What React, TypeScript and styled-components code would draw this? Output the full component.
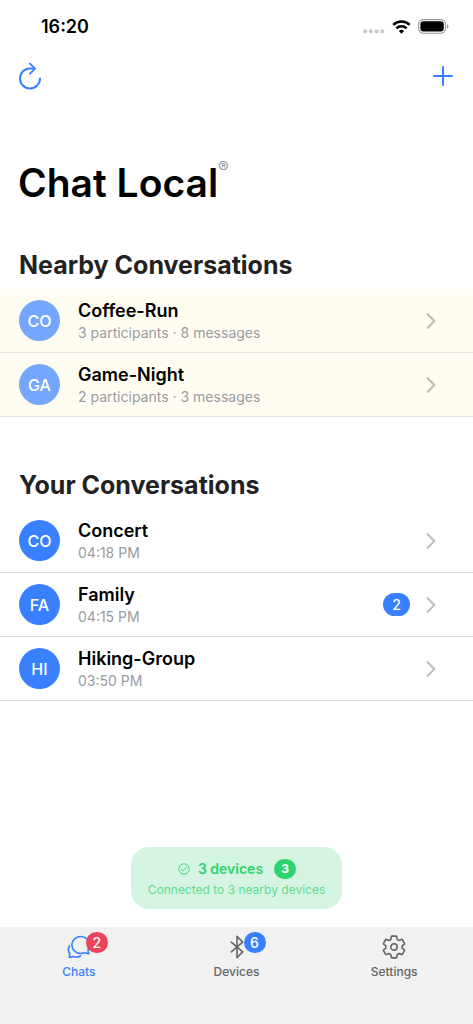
import React from "react";
import styled, { createGlobalStyle } from "styled-components";
import {
  IoAddOutline,
  IoBluetoothOutline,
  IoChatbubblesOutline,
  IoCheckmarkCircleOutline,
  IoChevronForward,
  IoRefreshOutline,
  IoSettingsOutline,
} from "react-icons/io5";

const GlobalStyle = createGlobalStyle`
  *, *::before, *::after { box-sizing: border-box; }
  body {
    margin: 0;
    background: #fff;
    color: #000;
    font-family: Inter, "Liberation Sans", sans-serif;
  }
  h1, h2, p, ul { margin: 0; padding: 0; }
  ul { list-style: none; }
  button {
    margin: 0;
    padding: 0;
    border: 0;
    background: none;
    color: inherit;
    font: inherit;
    text-align: left;
    cursor: pointer;
  }
  svg { display: block; flex: none; }
`;

const Screen = styled.div`
  display: flex;
  flex-direction: column;
  min-height: 100vh;
`;

const StatusBar = styled.div`
  display: flex;
  align-items: center;
  justify-content: space-between;
  height: 53px;
  padding: 0 24px 0 41px;
`;

const Clock = styled.time`
  font-size: 18px;
  line-height: 24px;
  font-weight: 600;
`;

const StatusIcons = styled.div`
  display: flex;
  align-items: center;
  gap: 7px;
`;

const Toolbar = styled.div`
  display: flex;
  align-items: center;
  justify-content: space-between;
  height: 46px;
  padding: 0 14px;
  color: #3880ff;
  font-size: 32px;
`;

const Main = styled.main`
  flex: 1;
  padding-top: 58px;
`;

const Title = styled.h1`
  display: flex;
  align-items: flex-start;
  padding: 0 18px;
  font-size: 39px;
  line-height: 52px;
  font-weight: 600;
`;

const Mark = styled.span`
  color: #92949c;
  font-size: 16px;
  line-height: 20px;
  font-weight: 400;
`;

const Section = styled.section`
  padding: 40px 0 12px;
`;

const Heading = styled.h2`
  padding: 0 19px 8px;
  color: #222;
  font-size: 25px;
  line-height: 32px;
  font-weight: 700;
`;

const Row = styled.button<{ $nearby?: boolean }>`
  display: flex;
  align-items: center;
  width: 100%;
  height: 64px;
  padding: 0 30px 0 19px;
  border-bottom: 1px solid ${(p) => (p.$nearby ? "#e2e4df" : "#e2e2e3")};
  background: ${(p) => (p.$nearby ? "#fffdf1" : "#fff")};
`;

const Avatar = styled.span<{ $nearby?: boolean }>`
  display: flex;
  align-items: center;
  justify-content: center;
  width: 41px;
  height: 41px;
  border-radius: 50%;
  background: ${(p) => (p.$nearby ? "#74a6fd" : "#3880ff")};
  color: #fff;
  font-size: 16px;
  line-height: 20px;
  font-weight: 500;
`;

const RowText = styled.span`
  display: flex;
  flex: 1;
  flex-direction: column;
  padding-left: 18px;
`;

const Name = styled.span`
  font-size: 18px;
  line-height: 24px;
  font-weight: 600;
`;

const Detail = styled.span`
  color: #999ba3;
  font-size: 14px;
  line-height: 20px;
`;

const Unread = styled.span`
  min-width: 27px;
  margin-right: 9px;
  border-radius: 12px;
  background: #3880ff;
  color: #fff;
  font-size: 14px;
  line-height: 23px;
  font-weight: 500;
  text-align: center;
`;

const Chevron = styled(IoChevronForward)`
  color: #c0bfbc;
  font-size: 24px;
`;

const Status = styled.div`
  align-self: center;
  display: flex;
  flex-direction: column;
  align-items: center;
  gap: 3px;
  margin-bottom: 18px;
  padding: 12px 17px 11px;
  border-radius: 18px;
  background: #d5f5e2;
  color: #2dd36f;
`;

const StatusLine = styled.div`
  display: flex;
  align-items: center;
  gap: 7px;
  font-size: 14px;
  line-height: 20px;
  font-weight: 600;
`;

const Count = styled.span`
  min-width: 22px;
  margin-left: 4px;
  border-radius: 10px;
  background: #2dd36f;
  color: #fff;
  font-size: 12px;
  line-height: 20px;
  font-weight: 700;
  text-align: center;
`;

const StatusNote = styled.p`
  color: #5fdc90;
  font-size: 12px;
  line-height: 16px;
  font-weight: 400;
`;

const TabBar = styled.nav`
  display: flex;
  height: 97px;
  background: #f1f1f1;
`;

const Tab = styled.button<{ $active?: boolean }>`
  display: flex;
  flex: 1;
  flex-direction: column;
  align-items: center;
  align-self: flex-start;
  gap: 4px;
  padding-top: 7px;
  color: ${(p) => (p.$active ? "#3880ff" : "#666")};
  font-size: 12px;
  line-height: 16px;
  font-weight: 500;
`;

const TabIcon = styled.span`
  position: relative;
  font-size: 26px;
`;

const TabBadge = styled.span<{ $danger?: boolean }>`
  position: absolute;
  top: -2px;
  left: 20px;
  min-width: 22px;
  border-radius: 11px;
  background: ${(p) => (p.$danger ? "#eb445a" : "#3880ff")};
  color: #fff;
  font-size: 14px;
  line-height: 21px;
  font-weight: 500;
  text-align: center;
`;

type Conversation = { name: string; detail: string; unread?: number };

const nearby: Conversation[] = [
  { name: "Coffee-Run", detail: "3 participants · 8 messages" },
  { name: "Game-Night", detail: "2 participants · 3 messages" },
];

const yours: Conversation[] = [
  { name: "Concert", detail: "04:18 PM" },
  { name: "Family", detail: "04:15 PM", unread: 2 },
  { name: "Hiking-Group", detail: "03:50 PM" },
];

function SignalIcon() {
  return (
    <svg width="22" height="16" viewBox="0 0 22 16" fill="#c9c9c9" aria-hidden="true">
      {[2.2, 7.9, 13.6, 19.3].map((x) => (
        <circle key={x} cx={x} cy="12.4" r="2.1" />
      ))}
    </svg>
  );
}

function WifiIcon() {
  return (
    <svg width="19" height="14" viewBox="0 0 19 14" fill="none" stroke="#000" strokeWidth="2.5" aria-hidden="true">
      <path d="M1.3 4.9a11.6 11.6 0 0 1 16.4 0" />
      <path d="M4.4 8.3a7.2 7.2 0 0 1 10.2 0" />
      <path d="M9.5 13.7 6.9 11.1a3.7 3.7 0 0 1 5.2 0Z" fill="#000" stroke="none" />
    </svg>
  );
}

function BatteryIcon() {
  return (
    <svg width="31" height="15" viewBox="0 0 31 15" aria-hidden="true">
      <rect x="0.6" y="0.6" width="27" height="13.6" rx="4.6" fill="none" stroke="#999" strokeWidth="1.1" />
      <rect x="2.4" y="2.3" width="23.4" height="10.2" rx="3" />
      <path d="M29 5.2v4.4c.9-.4 1.5-1.2 1.5-2.2S29.9 5.6 29 5.2Z" fill="#999" />
    </svg>
  );
}

function ConversationList({ items, isNearby }: { items: Conversation[]; isNearby?: boolean }) {
  return (
    <ul>
      {items.map((c) => (
        <li key={c.name}>
          <Row type="button" $nearby={isNearby}>
            <Avatar $nearby={isNearby}>{c.name.slice(0, 2).toUpperCase()}</Avatar>
            <RowText>
              <Name>{c.name}</Name>
              <Detail>{c.detail}</Detail>
            </RowText>
            {c.unread && <Unread>{c.unread}</Unread>}
            <Chevron aria-hidden="true" />
          </Row>
        </li>
      ))}
    </ul>
  );
}

export default function App() {
  return (
    <>
      <GlobalStyle />
      <Screen>
        <StatusBar>
          <Clock>16:20</Clock>
          <StatusIcons>
            <SignalIcon />
            <WifiIcon />
            <BatteryIcon />
          </StatusIcons>
        </StatusBar>
        <Toolbar>
          <button type="button" aria-label="Refresh">
            <IoRefreshOutline />
          </button>
          <button type="button" aria-label="New conversation">
            <IoAddOutline />
          </button>
        </Toolbar>
        <Main>
          <Title>
            Chat Local<Mark>®</Mark>
          </Title>
          <Section>
            <Heading>Nearby Conversations</Heading>
            <ConversationList items={nearby} isNearby />
          </Section>
          <Section>
            <Heading>Your Conversations</Heading>
            <ConversationList items={yours} />
          </Section>
        </Main>
        <Status role="status">
          <StatusLine>
            <IoCheckmarkCircleOutline aria-hidden="true" />
            3 devices
            <Count>3</Count>
          </StatusLine>
          <StatusNote>Connected to 3 nearby devices</StatusNote>
        </Status>
        <TabBar>
          <Tab type="button" $active>
            <TabIcon>
              <IoChatbubblesOutline />
              <TabBadge $danger>2</TabBadge>
            </TabIcon>
            Chats
          </Tab>
          <Tab type="button">
            <TabIcon>
              <IoBluetoothOutline />
              <TabBadge>6</TabBadge>
            </TabIcon>
            Devices
          </Tab>
          <Tab type="button">
            <TabIcon>
              <IoSettingsOutline />
            </TabIcon>
            Settings
          </Tab>
        </TabBar>
      </Screen>
    </>
  );
}
